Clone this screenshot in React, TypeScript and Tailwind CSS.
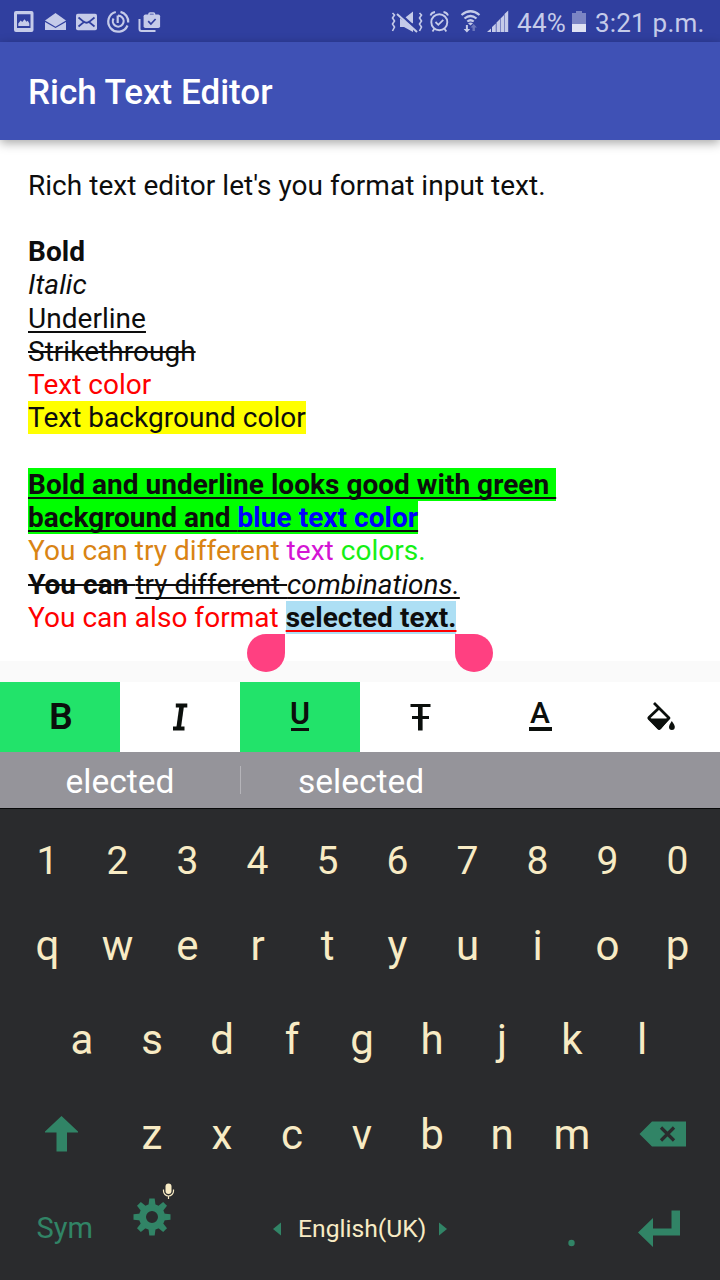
import { ReactNode } from "react";

const Svg = ({ w, h, className, children }: { w: number; h: number; className?: string; children: ReactNode }) => (
  <svg width={w} height={h} viewBox={`0 0 ${w} ${h}`} className={`shrink-0 ${className ?? ""}`} fill="currentColor">
    {children}
  </svg>
);

const StatusBar = () => (
  <div className="flex h-[42px] justify-between bg-[#303f9f] text-[#c5cbe9]">
    <Svg w={170} h={42}>
      <path fillRule="evenodd" d="M16 11h15.500q2 0 2 2v17q0 2-2 2h-15.500q-2 0-2-2v-17q0-2 2-2zM17 14.300v13.700h13.500v-13.700z" />
      <path d="M18.300 26v-2.500l2.400-3 1.500 1.500 2.300-2.800 2 2.500 1.300-1 1.500 2.800v2.500z" />
      <path d="M45 20.500l10.500-7.500 10.500 7.500-10.500 6.300z" />
      <path d="M45 22l10.500 6 10.500-6v8h-21z" />
      <rect x="76" y="13.800" width="21" height="16.400" rx="1.800" />
      <path d="M78.500 17.500l5.500 4.500-5.500 4.500M94.500 17.500l-5.500 4.500 5.500 4.500M83.500 21.500q3 2.500 6 0" fill="none" stroke="#303f9f" strokeWidth="1.700" />
      <path d="M115.800 12a10 10 0 1 0 11.700 13.500M120.500 11.900a10 10 0 0 1 7.700 10.600" fill="none" stroke="currentColor" strokeWidth="2.200" />
      <path d="M113.500 18.500a5.400 5.400 0 1 0 8.500-1.200q-1.500-1.600-4-1.600M117.700 15.500v7.500" fill="none" stroke="currentColor" strokeWidth="2.200" />
      <path d="M139.500 19v10q0 2 2 2h14" fill="none" stroke="currentColor" strokeWidth="2" />
      <rect x="143.600" y="14.500" width="16.500" height="13.500" rx="1.800" />
      <path d="M149 15.500v-1.500q0-1 1-1h3.500q1 0 1 1v1.500" fill="none" stroke="currentColor" strokeWidth="1.600" />
      <path d="M148.200 21.200l2.700 2.800 4.700-5" fill="none" stroke="#303f9f" strokeWidth="1.700" />
    </Svg>
    <div className="flex">
      <Svg w={128} h={42}>
        <path d="M11 18.500h4l9-7v12zM11 18.500v8.500h4l9 5v-6z" />
        <path d="M9.500 12.500L29.500 31" stroke="#303f9f" strokeWidth="2.500" />
        <path d="M8 14L28 32" stroke="currentColor" strokeWidth="2" />
        <path d="M3.500 13l2 2-2 3 2 3-2 3 2 3-2 4M30.500 13l2 2-2 3 2 3-2 3 2 3-2 4" fill="none" stroke="currentColor" strokeWidth="1.600" />
        <circle cx="50.300" cy="22.200" r="8" fill="none" stroke="currentColor" strokeWidth="1.900" />
        <path d="M46.500 22l2.800 2.800 5-5M41.500 15.500q1-3 4.500-3.500M59 15.500q-1-3-4.500-3.500M45.500 28.500l-2 3M55.300 28.500l2 3" fill="none" stroke="currentColor" strokeWidth="1.800" />
        <path d="M72.500 15q9-7.500 18 0M75.500 18.500q6-5 12 0M78.300 21.500q3.200-2.500 6.400 0" fill="none" stroke="currentColor" strokeWidth="2.200" />
        <path d="M79 23.300q2.500-1.800 5 0l-2.500 2.200zM76.900 25h2v4h2.300l-3.300 3.500-3.300-3.500h2.300z" />
        <path d="M83.500 31v-3.500h-2l3.200-3.500 3.200 3.500h-2v3.500z" opacity=".4" />
        <path d="M98 32l4-3.500v3.500zM103 27l3.800-3.500v8.500h-3.800zM107.500 22.500l3.500-3.500v13h-3.500zM111.500 18.500l3.500-3.500v17h-3.500zM115.500 14l3.700-3.500v21.500h-3.700z" />
      </Svg>
      <span className="mt-[6px] w-[52px] text-[26px] leading-[34px] tracking-[0.3px] whitespace-nowrap">44%</span>
      <Svg w={26} h={42}>
        <path d="M3 13h4v-2h6v2h4v11h-14z" opacity=".5" />
        <path d="M3 24h14v8h-14z" fill="#dfe2f3" />
      </Svg>
      <span className="mt-[6px] w-[125px] text-[26px] leading-[34px] tracking-[0.2px] whitespace-nowrap">3:21 p.m.</span>
    </div>
  </div>
);

const Editor = () => (
  <div className="relative h-[521px] bg-white pl-[28px] pt-[28.5px] text-[28px] leading-[33.250px] tracking-[0.03px] whitespace-pre text-[#0d0d0d]">
    <div>Rich text editor let's you format input text.</div>
    <br />
    <div className="font-bold">Bold</div>
    <div className="italic">Italic</div>
    <div className="underline decoration-2 underline-offset-[3px] [text-decoration-skip-ink:none]">Underline</div>
    <div className="line-through decoration-2">Strikethrough</div>
    <div className="text-[#ff0000]">Text color</div>
    <div><span className="bg-[#ffff00]">Text background color</span></div>
    <br />
    <div className="font-bold underline decoration-2 underline-offset-[3px] [text-decoration-skip-ink:none]">
      <span className="bg-[#00ff00]">Bold and underline looks good with green </span>
    </div>
    <div className="font-bold underline decoration-2 underline-offset-[3px] [text-decoration-skip-ink:none]">
      <span className="bg-[#00ff00]">background and <span className="text-[#0000ff]">blue text color</span></span>
    </div>
    <div className="text-[#d98414]">You can try different <span className="text-[#d414d4]">text </span><span className="text-[#14f014]">colors.</span></div>
    <div>
      <span className="line-through decoration-2"><b>You can </b><span className="underline decoration-2 underline-offset-[3px] [text-decoration-skip-ink:none]">try different </span></span>
      <span className="italic underline decoration-2 underline-offset-[3px] [text-decoration-skip-ink:none]">combinations.</span>
    </div>
    <div className="text-[#ff0000]">You can also format <b className="bg-[#addff4] text-[#0d0d0d] underline decoration-[#ff0000] decoration-2 underline-offset-[3px]">selected text.</b></div>
    <div className="absolute left-[247px] top-[493.5px] size-[38px] rounded-full rounded-tr-none bg-[#ff4081]" />
    <div className="absolute left-[455px] top-[493.5px] size-[38px] rounded-full rounded-tl-none bg-[#ff4081]" />
  </div>
);

const Toolbar = () => (
  <div className="grid h-[70px] grid-cols-6 bg-white text-[#0b0f0c]">
    <div className="flex items-center justify-center bg-[#22e36a] pl-[2px]"><span className="text-[37.5px] leading-none font-semibold">B</span></div>
    <div className="flex items-center justify-center pb-[1px]">
      <Svg w={16} h={28}>
        <path d="M3.800 2.500H15.300M1 25.500H12.500" stroke="currentColor" strokeWidth="4" />
        <path d="M9.800 2L6.500 26" stroke="currentColor" strokeWidth="4.600" />
      </Svg>
    </div>
    <div className="flex flex-col items-center bg-[#22e36a] pt-[16px]">
      <span className="text-[30.5px] leading-[31px] font-semibold">U</span>
      <div className="-mt-px h-[3px] w-[18px] bg-current" />
    </div>
    <div className="flex items-center justify-center pb-[1px]">
      <Svg w={21} h={28}>
        <path d="M0.500 2.500H20.500M2 14.500H19" stroke="currentColor" strokeWidth="3.200" />
        <path d="M10.300 2V27.500" stroke="currentColor" strokeWidth="4.600" />
      </Svg>
    </div>
    <div className="flex flex-col items-center pt-[15px]">
      <span className="text-[30px] leading-[31px] font-medium">A</span>
      <div className="-mt-px h-[4px] w-[23px] bg-current" />
    </div>
    <div className="flex items-center justify-center pb-[2px]">
      <Svg w={30} h={32}>
        <path d="M9 3L24 18 14 28.500 4 18.500Q3.500 18 4 17.500L14 8" fill="none" stroke="currentColor" strokeWidth="2.800" strokeLinejoin="round" />
        <path d="M3 18.500h21.500l-8.500 10.500q-1.800 1.200-3.500 0z" />
        <path d="M26.800 21q3 4 3 6a2.900 2.900 0 0 1-5.800 0q0-2 2.800-6z" />
      </Svg>
    </div>
  </div>
);

const Key = ({ children }: { children: ReactNode }) => (
  <div className="flex w-[70px] shrink-0 items-center justify-center">{children}</div>
);

const Row = ({ keys, className }: { keys: string; className: string }) => (
  <div className={`flex ${className}`}>{keys.split("").map((k) => <Key key={k}>{k}</Key>)}</div>
);

const Keyboard = () => (
  <div className="h-[472px] border-t border-[#080909] bg-[#2a2b2d] text-[#f8ebc4]">
    <Row keys="1234567890" className="h-[104px] pl-[12.500px] text-[39px]" />
    <Row keys="qwertyuiop" className="-mt-[11px] h-[86px] pl-[12.500px] text-[42px]" />
    <Row keys="asdfghjkl" className="mt-[8px] h-[86px] pl-[47px] text-[42px]" />
    <div className="mt-[8px] flex h-[86px] items-center text-[42px]">
      <Svg w={117} h={60} className="text-[#318466]">
        <path d="M61.500 13L78 28.500v1H67V48.500H56.500V29.500H45v-1z" />
      </Svg>
      <Row keys="zxcvbnm" className="pt-[2px]" />
      <Svg w={110} h={60} className="text-[#318466]">
        <path d="M32.500 31L45 18.500H79V43.500H45z" />
        <path d="M54 24.500L67 37.500M67 24.500L54 37.500" stroke="#2a2b2d" strokeWidth="3.200" />
      </Svg>
    </div>
    <div className="mt-[2px] flex h-[88px] items-center text-[#318466]">
      <div className="w-[117px] pl-[36.500px] pt-[14px] text-[29px]">Sym</div>
      <Svg w={70} h={100}>
        <g transform="translate(35 45)">
          {[0, 45, 90, 135, 180, 225, 270, 315].map((a) => (
            <path key={a} transform={`rotate(${a})`} d="M-3.600-11L-2.700-18.500H2.700L3.600-11z" />
          ))}
          <circle r="9.500" fill="none" stroke="currentColor" strokeWidth="7" />
        </g>
        <rect x="48.500" y="11.500" width="6" height="10.500" rx="3" fill="#f8ebc4" />
        <path d="M46.500 17.500v1.500a5 5 0 0 0 10 0v-1.500M51.500 24v3" fill="none" stroke="#f8ebc4" strokeWidth="1.200" />
      </Svg>
      <Svg w={111} h={100}><path d="M86 57l8-6.500v13z" /></Svg>
      <div className="w-[127px] pt-[14px] text-center text-[24.7px] whitespace-nowrap text-[#f8ebc4]">English(UK)</div>
      <Svg w={295} h={100}>
        <path d="M22 57l-8-6.500v13z" />
        <circle cx="146.500" cy="71" r="3.200" />
        <path d="M213 60.500L228 46v10.500H246.500V38.500H255V63.500H228V75z" />
      </Svg>
    </div>
  </div>
);

export default function App() {
  return (
    <div className="h-[1280px] w-[720px] overflow-hidden bg-[#fafafa] font-['Roboto',sans-serif]">
      <StatusBar />
      <div className="relative z-10 flex h-[98px] items-center bg-[#3f51b5] pl-[28px] pt-[5px] text-[35px] font-medium text-white shadow-[0_3px_10px_rgba(0,0,0,0.35)]">Rich Text Editor</div>
      <Editor />
      <div className="h-[21px] bg-[#fafafa]" />
      <Toolbar />
      <div className="flex h-[56px] bg-[#95949a] text-[33.5px] leading-[60px] text-white">
        <div className="w-[240px] text-center">elected</div>
        <div className="mt-[14px] h-[28px] w-px bg-[#b5b4b9]" />
        <div className="w-[240px] text-center">selected</div>
      </div>
      <Keyboard />
    </div>
  );
}
